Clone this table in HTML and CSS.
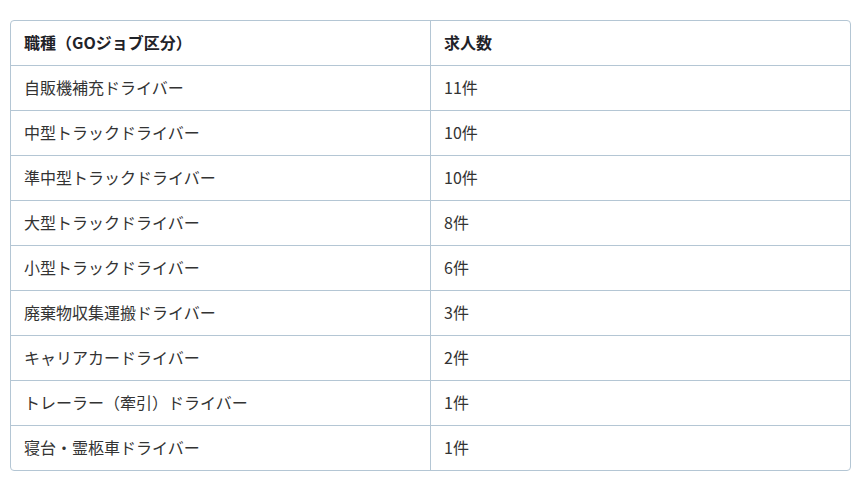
FILE: index.html
```html
<!DOCTYPE html>
<html lang="ja">
<head>
<meta charset="utf-8">
<title>職種別求人数</title>
<link rel="stylesheet" href="styles.css">
</head>
<body>
<div class="wrap">
<table class="jobs">
<thead>
<tr><th class="col-name">職種（GOジョブ区分）</th><th>求人数</th></tr>
</thead>
<tbody>
<tr><td>自販機補充ドライバー</td><td>11件</td></tr>
<tr><td>中型トラックドライバー</td><td>10件</td></tr>
<tr><td>準中型トラックドライバー</td><td>10件</td></tr>
<tr><td>大型トラックドライバー</td><td>8件</td></tr>
<tr><td>小型トラックドライバー</td><td>6件</td></tr>
<tr><td>廃棄物収集運搬ドライバー</td><td>3件</td></tr>
<tr><td>キャリアカードライバー</td><td>2件</td></tr>
<tr><td>トレーラー（牽引）ドライバー</td><td>1件</td></tr>
<tr><td>寝台・霊柩車ドライバー</td><td>1件</td></tr>
</tbody>
</table>
</div>
</body>
</html>
```

FILE: styles.css
```css
html, body {
  margin: 0;
  padding: 0;
  background: #ffffff;
}
body {
  font-family: "Noto Sans CJK JP", "Noto Sans", sans-serif;
  font-size: 16px;
  color: #333333;
}
.wrap {
  padding: 20px 14px 0 10px;
}
.jobs {
  width: 841px;
  border-collapse: separate;
  border-spacing: 0;
  border: 1px solid #b4c6d4;
  border-radius: 4px;
  table-layout: fixed;
}
.jobs .col-name {
  width: 420px;
}
.jobs th,
.jobs td {
  height: 45px;
  box-sizing: border-box;
  padding: 0 13px 2px;
  text-align: left;
  vertical-align: middle;
  border-bottom: 1px solid #b4c6d4;
  line-height: 20px;
  font-size: 16px;
}
.jobs th:first-child,
.jobs td:first-child {
  border-right: 1px solid #b4c6d4;
}
.jobs tbody tr:last-child td {
  border-bottom: none;
  height: 44px;
}
.jobs th {
  font-weight: bold;
  color: #1f2329;
}
```
